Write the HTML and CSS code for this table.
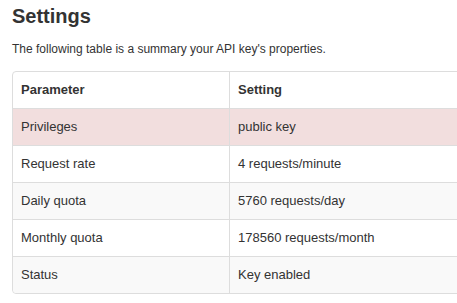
FILE: index.html
```html
<!DOCTYPE html>
<html>
<head>
<meta charset="utf-8">
<link rel="stylesheet" href="styles.css">
</head>
<body>
<div class="page">
  <h2 class="title">Settings</h2>
  <p class="intro">The following table is a summary your API key's properties.</p>
  <div class="table-wrap">
    <table class="settings">
      <thead>
        <tr><th>Parameter</th><th>Setting</th></tr>
      </thead>
      <tbody>
        <tr class="danger"><td>Privileges</td><td>public key</td></tr>
        <tr><td>Request rate</td><td>4 requests/minute</td></tr>
        <tr class="odd"><td>Daily quota</td><td>5760 requests/day</td></tr>
        <tr><td>Monthly quota</td><td>178560 requests/month</td></tr>
        <tr class="odd"><td>Status</td><td>Key enabled</td></tr>
      </tbody>
    </table>
  </div>
</div>
</body>
</html>
```
FILE: styles.css
```css
html, body {
  margin: 0;
  padding: 0;
  background: #fff;
}
body {
  font-family: "Liberation Sans", Arial, sans-serif;
  font-size: 13px;
  color: #333;
  overflow: hidden;
}
.page {
  padding: 0 0 0 12px;
}
.title {
  margin: 0;
  padding-top: 4px;
  font-size: 20px;
  line-height: 24px;
  font-weight: bold;
  color: #333;
}
.intro {
  margin: 12px 0 0 0;
  font-size: 12px;
  line-height: 18px;
}
.table-wrap {
  margin-top: 13px;
  width: 460px;
}
.settings {
  width: 100%;
  border-collapse: separate;
  border-spacing: 0;
  border: 1px solid #ddd;
  border-radius: 4px;
}
.settings th,
.settings td {
  text-align: left;
  padding: 8px 8px;
  line-height: 20px;
  border-top: 1px solid #ddd;
  border-left: 1px solid #ddd;
}
.settings th:first-child,
.settings td:first-child {
  border-left: 0;
  width: 200px;
}
.settings thead th {
  border-top: 0;
}
.settings tr.odd td {
  background: #f9f9f9;
}
.settings tr.danger td {
  background: #f2dede;
}
.settings tbody tr:last-child td:first-child {
  border-bottom-left-radius: 4px;
}
```
